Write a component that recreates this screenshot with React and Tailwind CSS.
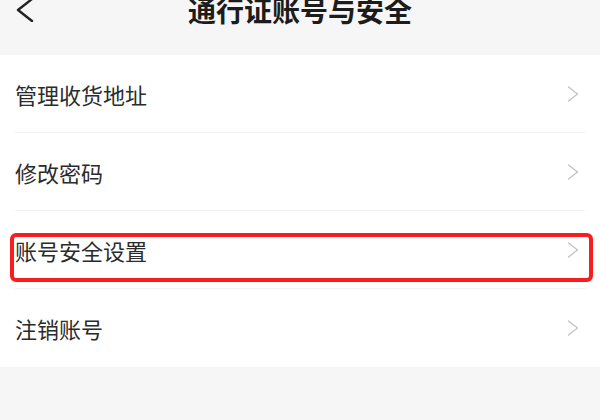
import React from 'react';

const items = ['管理收货地址', '修改密码', '账号安全设置', '注销账号'];

function Chevron({ className }) {
  return (
    <svg viewBox="0 0 12 16" className={className} fill="none">
      <path d="M1.5 1 L10.5 8 L1.5 15" stroke="currentColor" strokeWidth="1.4" strokeLinecap="round" strokeLinejoin="round" />
    </svg>
  );
}

export default function App() {
  return (
    <div
      className="w-[600px] h-[420px] overflow-hidden bg-[#f6f6f6]"
      style={{ fontFamily: '"Noto Sans CJK SC", "Noto Sans", sans-serif' }}
    >
      <div className="h-[55px] grid grid-cols-[1fr_auto_1fr] items-start">
        <div className="pl-[16px] -mt-[2px]">
          <svg viewBox="0 0 18 24" className="w-[18px] h-[24px] text-[#222]" fill="none">
            <path d="M16 1 L2 12 L16 23" stroke="currentColor" strokeWidth="2.4" strokeLinecap="round" strokeLinejoin="round" />
          </svg>
        </div>
        <h1 className="-mt-[4px] text-[28px] leading-[28px] font-bold text-[#1c1c1c]">
          通行证账号与安全
        </h1>
        <div />
      </div>

      <div className="bg-white">
        {items.map((item, i) => (
          <div key={item} className="relative px-[15px]">
            <div
              className={
                'h-[78px] flex items-center justify-between ' +
                (i < items.length - 1 ? 'border-b border-[#f1f1f1]' : '')
              }
            >
              <span className="text-[22px] leading-none text-[#2b2b2b]">{item}</span>
              <Chevron className="w-[12px] h-[16px] mr-[6px] text-[#c4c4c4]" />
            </div>
            {i === 2 && (
              <div className="absolute left-[10px] top-[22px] w-[583px] h-[49px] border-[4px] border-[#f81e1e] rounded-[6px]" />
            )}
          </div>
        ))}
      </div>
    </div>
  );
}
